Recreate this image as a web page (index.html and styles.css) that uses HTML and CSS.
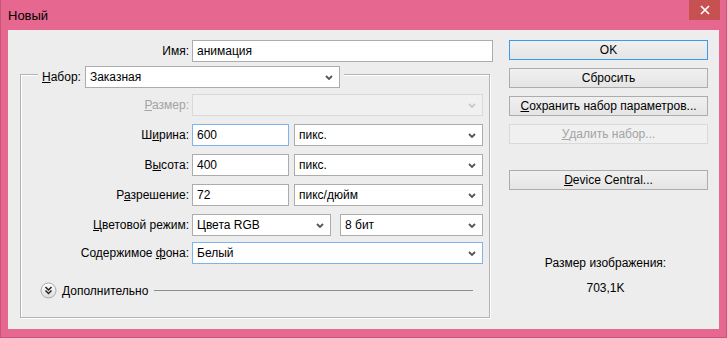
FILE: index.html
```html
<!DOCTYPE html>
<html lang="ru">
<head>
    <meta charset="UTF-8">
    <title>Новый</title>
    <link rel="stylesheet" href="styles.css">
</head>
<body>
    <div class="window">
        <div class="titlebar">
            <span class="title">Новый</span>
            <div class="close">
                <svg width="10" height="10" viewBox="0 0 10 10"><path d="M1 1 L9 9 M9 1 L1 9" stroke="#fff" stroke-width="1.6"/></svg>
            </div>
        </div>

        <div class="client">
            <div class="main">
                <div class="name-row">
                    <span class="lbl">Имя:</span>
                    <div class="field name">анимация</div>
                </div>

                <div class="group">
                    <div class="legend">
                        <span class="lbl"><u>Н</u>абор:</span>
                        <div class="field select preset">Заказная
                            <svg class="chev" width="8" height="5" viewBox="0 0 8 5"><polyline points="1,1 4,4 7,1" fill="none" stroke="#555" stroke-width="1.8"/></svg>
                        </div>
                    </div>

                    <div class="rows">
                        <span class="lbl disabled"><u>Р</u>азмер:</span>
                        <div class="field select disabled-field">
                            <svg class="chev" width="8" height="5" viewBox="0 0 8 5"><polyline points="1,1 4,4 7,1" fill="none" stroke="#c8c8c8" stroke-width="1.8"/></svg>
                        </div>

                        <span class="lbl">Ш<u>и</u>рина:</span>
                        <div class="pair">
                            <div class="field num focus">600</div>
                            <div class="field select unit">пикс.
                                <svg class="chev" width="8" height="5" viewBox="0 0 8 5"><polyline points="1,1 4,4 7,1" fill="none" stroke="#555" stroke-width="1.8"/></svg>
                            </div>
                        </div>

                        <span class="lbl">В<u>ы</u>сота:</span>
                        <div class="pair">
                            <div class="field num">400</div>
                            <div class="field select unit">пикс.
                                <svg class="chev" width="8" height="5" viewBox="0 0 8 5"><polyline points="1,1 4,4 7,1" fill="none" stroke="#555" stroke-width="1.8"/></svg>
                            </div>
                        </div>

                        <span class="lbl">Р<u>а</u>зрешение:</span>
                        <div class="pair">
                            <div class="field num">72</div>
                            <div class="field select unit">пикс/дюйм
                                <svg class="chev" width="8" height="5" viewBox="0 0 8 5"><polyline points="1,1 4,4 7,1" fill="none" stroke="#555" stroke-width="1.8"/></svg>
                            </div>
                        </div>

                        <span class="lbl"><u>Ц</u>ветовой режим:</span>
                        <div class="pair wide-gap">
                            <div class="field select mode">Цвета RGB
                                <svg class="chev" width="8" height="5" viewBox="0 0 8 5"><polyline points="1,1 4,4 7,1" fill="none" stroke="#555" stroke-width="1.8"/></svg>
                            </div>
                            <div class="field select bits">8 бит
                                <svg class="chev" width="8" height="5" viewBox="0 0 8 5"><polyline points="1,1 4,4 7,1" fill="none" stroke="#555" stroke-width="1.8"/></svg>
                            </div>
                        </div>

                        <span class="lbl last">Содержимое <u>ф</u>она:</span>
                        <div class="field select focus last">Белый
                            <svg class="chev" width="8" height="5" viewBox="0 0 8 5"><polyline points="1,1 4,4 7,1" fill="none" stroke="#555" stroke-width="1.8"/></svg>
                        </div>
                    </div>

                    <div class="advanced">
                        <svg width="17" height="17" viewBox="0 0 17 17">
                            <defs>
                                <linearGradient id="btn" x1="0" y1="0" x2="0" y2="1">
                                    <stop offset="0" stop-color="#ffffff"/>
                                    <stop offset="1" stop-color="#dcdcdc"/>
                                </linearGradient>
                            </defs>
                            <circle cx="8.5" cy="8.5" r="7.5" fill="url(#btn)" stroke="#a8a8a8"/>
                            <polyline points="5.5,5 8.5,8 11.5,5" fill="none" stroke="#222" stroke-width="1.5"/>
                            <polyline points="5.5,8.5 8.5,11.5 11.5,8.5" fill="none" stroke="#222" stroke-width="1.5"/>
                        </svg>
                        <span>Дополнительно</span>
                        <div class="line"></div>
                    </div>
                </div>
            </div>

            <div class="side">
                <div class="btn default">OK</div>
                <div class="btn">Сбросить</div>
                <div class="btn"><u>С</u>охранить набор параметров...</div>
                <div class="btn disabled-btn"><u>У</u>далить набор...</div>
                <div class="btn device"><u>D</u>evice Central...</div>

                <div class="info">
                    <div>Размер изображения:</div>
                    <div class="size">703,1K</div>
                </div>
            </div>
        </div>
    </div>
</body>
</html>
```

FILE: styles.css
```css
* {
    margin: 0;
    padding: 0;
    box-sizing: border-box;
}

body {
    font-family: "Liberation Sans", Arial, sans-serif;
    font-size: 12px;
    color: #000;
    background: #e6678f;
    width: 727px;
    height: 338px;
    overflow: hidden;
}

.window {
    height: 338px;
    border: 1px solid #c9557a;
    border-top: none;
    display: flex;
    flex-direction: column;
}

.titlebar {
    height: 30px;
    display: flex;
    align-items: flex-start;
    justify-content: space-between;
    padding-left: 7px;
}

.title {
    font-size: 13px;
    margin-top: 8px;
    color: #000;
}

.close {
    width: 31px;
    height: 20px;
    margin-right: 6px;
    background: #c75050;
    display: flex;
    align-items: center;
    justify-content: center;
}

.client {
    margin: 0 7px 0 7px;
    height: 299px;
    background: #ededed;
    display: flex;
}

.main {
    width: 490px;
    padding-left: 12px;
}

.lbl {
    text-align: right;
    white-space: nowrap;
}

.lbl.disabled {
    color: #a3a3a3;
}

.name-row {
    margin-top: 10px;
    display: grid;
    grid-template-columns: 169px 301px;
    column-gap: 3px;
    align-items: center;
}

.field {
    height: 22px;
    background: #fff;
    border: 1px solid #acacac;
    display: flex;
    align-items: center;
    padding-left: 4px;
    white-space: nowrap;
    position: relative;
}

.field.focus {
    border-color: #7eb4ea;
}

.select {
    justify-content: space-between;
    padding-right: 6px;
}

.chev {
    flex-shrink: 0;
}

.disabled-field {
    background: #f0f0f0;
    border-color: #d9d9d9;
    justify-content: flex-end;
}

.group {
    margin-top: 12px;
    width: 470px;
    height: 244px;
    border: 1px solid #b4b4b4;
    box-shadow: inset 1px 1px 0 #fff, 1px 1px 0 #fff;
    position: relative;
    padding-top: 19px;
}

.legend {
    position: absolute;
    top: -9px;
    left: 17px;
    padding: 0 4px 0 4px;
    background: #ededed;
    display: flex;
    align-items: center;
    gap: 4px;
}

.preset {
    width: 255px;
}

.rows {
    display: grid;
    grid-template-columns: 168px 291px;
    column-gap: 3px;
    row-gap: 8px;
    align-items: center;
}

.rows .last {
    margin-top: -2px;
}

.pair {
    display: flex;
    gap: 5px;
}

.pair.wide-gap {
    gap: 9px;
}

.num {
    width: 97px;
}

.unit {
    width: 189px;
}

.mode {
    width: 139px;
}

.bits {
    width: 143px;
}

.advanced {
    margin-top: 18px;
    margin-left: 19px;
    margin-right: 16px;
    display: flex;
    align-items: center;
    gap: 5px;
}

.advanced .line {
    flex: 1;
    height: 1px;
    background: #8c8c8c;
    margin-left: 1px;
}

.side {
    margin-left: 11px;
    width: 199px;
    padding-top: 10px;
    display: flex;
    flex-direction: column;
    gap: 8px;
}

.btn {
    height: 20px;
    border: 1px solid #acacac;
    background: linear-gradient(#f0f0f0, #e5e5e5);
    display: flex;
    align-items: center;
    justify-content: center;
    white-space: nowrap;
}

.btn.default {
    border-color: #3c99f0;
}

.btn.disabled-btn {
    color: #a3a3a3;
    background: #f0f0f0;
    border-color: #d9d9d9;
}

.btn.device {
    margin-top: 18px;
}

.info {
    margin-top: 57px;
    text-align: center;
    line-height: 16px;
    padding-right: 6px;
}

.info .size {
    margin-top: 9px;
}
```
